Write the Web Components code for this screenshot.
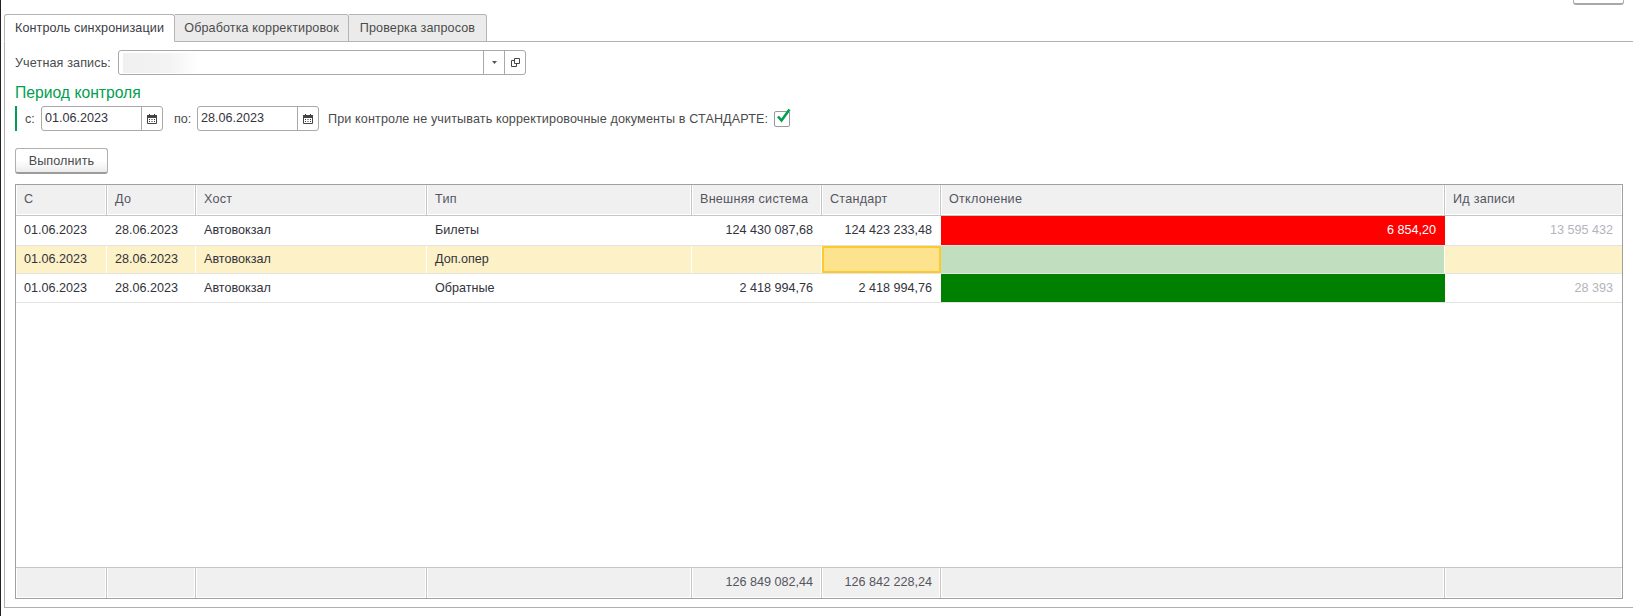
<!DOCTYPE html>
<html>
<head>
<meta charset="utf-8">
<title>Контроль синхронизации</title>
<style>
    html, body { margin: 0; background: #fff; overflow: hidden; }
    body { font: 12.6px "Liberation Sans", Arial, sans-serif; color: #4b4b4b; }
</style>
</head>
<body>
<sync-page></sync-page>

<script>
const CALENDAR_ICON = `
<svg width="10" height="10" viewBox="0 0 10 10">
    <rect x="2" y="0" width="1" height="2" fill="#333"/>
    <rect x="7" y="0" width="1" height="2" fill="#333"/>
    <path d="M.5 1.500h9v8h-9z" fill="#fff" stroke="#444"/>
    <rect x="0" y="1" width="10" height="3" fill="#444"/>
    <path d="M2 5h1v1H2zM4.500 5h1v1h-1zM7 5h1v1H7zM2 7h1v1H2zM4.500 7h1v1h-1zM7 7h1v1H7z" fill="#333"/>
</svg>`;

class TabStrip extends HTMLElement {
    constructor() {
        super();
        this.attachShadow({ mode: "open" });
    }

    connectedCallback() {
        const titles = this.getAttribute("titles").split("|");
        this.shadowRoot.innerHTML = `
        <style>
            :host { display: block; }
            .Strip {
                display: flex;
                height: 27px;
                padding-left: 3px;
            }
            .Tab {
                box-sizing: border-box;
                height: 28px;
                line-height: 26px;
                text-align: center;
                letter-spacing: 0.1px;
                color: #4b4b4b;
                background: #ebebeb;
                border: 1px solid #b4b4b4;
                border-left: 0;
                border-radius: 0 3px 0 0;
            }
            .Tab.Active {
                position: relative;
                background: #fff;
                border-left: 1px solid #b4b4b4;
                border-bottom-color: #fff;
                border-radius: 3px 3px 0 0;
                color: #3c3c46;
            }
            .Panel {
                box-sizing: border-box;
                height: 567px;
                margin-left: 3px;
                padding: 8px 10px 9px 10px;
                border: 1px solid #b0b0b0;
                border-right: 0;
            }
        </style>
        <div class="Strip">
            ${titles.map((t, i) => `<div class="Tab ${i == 0 ? "Active" : ""}" style="width:${[171, 174, 138][i]}px">${t}</div>`).join("")}
        </div>
        <div class="Panel"><slot></slot></div>`;
    }
}

class TextField extends HTMLElement {
    constructor() {
        super();
        this.attachShadow({ mode: "open" });
    }

    connectedCallback() {
        this.shadowRoot.innerHTML = `
        <style>
            :host { display: flex; align-items: center; height: 25px; }
            .Label { width: 103px; letter-spacing: 0.12px; white-space: nowrap; }
            .Box {
                box-sizing: border-box;
                display: flex;
                width: 408px;
                height: 25px;
                border: 1px solid #a9a9a9;
                border-radius: 3px;
            }
            .Value { flex: 1; position: relative; overflow: hidden; }
            .Smudge {
                position: absolute;
                left: 4px;
                top: 2px;
                width: 76px;
                height: 20px;
                background: linear-gradient(to right, #f0f0f0, #f3f3f3 60%, #fff);
            }
            .Btn {
                box-sizing: border-box;
                width: 21px;
                display: flex;
                align-items: center;
                justify-content: center;
                border-left: 1px solid #a9a9a9;
            }
        </style>
        <span class="Label">${this.getAttribute("label")}</span>
        <div class="Box">
            <div class="Value"><div class="Smudge"></div></div>
            <div class="Btn">
                <svg width="5" height="3" viewBox="0 0 5 3"><path d="M0 0h5L2.500 3z" fill="#555"/></svg>
            </div>
            <div class="Btn">
                <svg width="9" height="9" viewBox="0 0 9 9" fill="none" stroke="#444">
                    <path d="M3.500 .5h5v5h-5z"/>
                    <path d="M3.500 2.500h-3v6h5v-3"/>
                </svg>
            </div>
        </div>`;
    }
}

class DateField extends HTMLElement {
    constructor() {
        super();
        this.attachShadow({ mode: "open" });
    }

    connectedCallback() {
        this.shadowRoot.innerHTML = `
        <style>
            :host { display: block; }
            .Box {
                box-sizing: border-box;
                display: flex;
                width: 122px;
                height: 25px;
                border: 1px solid #a9a9a9;
                border-radius: 3px;
            }
            .Value {
                flex: 1;
                padding-left: 3px;
                line-height: 23px;
                color: #33333c;
            }
            .Btn {
                box-sizing: border-box;
                width: 21px;
                display: flex;
                align-items: center;
                justify-content: center;
                border-left: 1px solid #a9a9a9;
            }
        </style>
        <div class="Box">
            <div class="Value">${this.getAttribute("value")}</div>
            <div class="Btn">${CALENDAR_ICON}</div>
        </div>`;
    }
}

class CheckBox extends HTMLElement {
    constructor() {
        super();
        this.attachShadow({ mode: "open" });
    }

    connectedCallback() {
        this.shadowRoot.innerHTML = `
        <style>
            :host { display: block; position: relative; width: 16px; height: 16px; }
            .Box {
                box-sizing: border-box;
                width: 16px;
                height: 16px;
                border: 1px solid #9a9a9a;
                border-radius: 2px;
            }
            svg { position: absolute; left: 2px; top: -3px; }
        </style>
        <div class="Box"></div>
        <svg width="15" height="15" viewBox="0 0 15 15">
            <path d="M2 8.500l3.500 4L13.500 1.500" fill="none" stroke="#00a04e" stroke-width="2.600"/>
        </svg>`;
    }
}

class PushButton extends HTMLElement {
    constructor() {
        super();
        this.attachShadow({ mode: "open" });
    }

    connectedCallback() {
        this.shadowRoot.innerHTML = `
        <style>
            :host { display: block; width: 93px; }
            .Btn {
                box-sizing: border-box;
                height: 26px;
                line-height: 24px;
                text-align: center;
                letter-spacing: 0.1px;
                color: #4b4b4b;
                border: 1px solid #b0b0b0;
                border-bottom: 2px solid #9c9c9c;
                border-radius: 3px;
                background: linear-gradient(#fff, #fff 50%, #ececec);
            }
        </style>
        <div class="Btn"><slot></slot></div>`;
    }
}

const COLUMNS = "91px 89px 231px 265px 130px 119px 504px 177px";

class DataGrid extends HTMLElement {
    constructor() {
        super();
        this.attachShadow({ mode: "open" });
        this.head = ["С", "До", "Хост", "Тип", "Внешняя система", "Стандарт", "Отклонение", "Ид записи"];
        this.rows = [
            { height: 30, cells: ["01.06.2023", "28.06.2023", "Автовокзал", "Билеты", "124 430 087,68", "124 423 233,48", "6 854,20", "13 595 432"], state: "Red" },
            { height: 28, cells: ["01.06.2023", "28.06.2023", "Автовокзал", "Доп.опер", "", "", "", ""], state: "Pale", selected: true },
            { height: 29, cells: ["01.06.2023", "28.06.2023", "Автовокзал", "Обратные", "2 418 994,76", "2 418 994,76", "", "28 393"], state: "Green" },
        ];
        this.totals = ["", "", "", "", "126 849 082,44", "126 842 228,24", "", ""];
    }

    connectedCallback() {
        this.render();
    }

    renderRow(row) {
        const cells = row.cells.map((text, i) => {
            let cls = "Cell";
            if (i >= 4) cls += " Num";
            if (i == 5 && row.selected) cls += " Current";
            if (i == 6) cls += " " + row.state;
            if (i == 7) cls += " Id";
            return `<div class="${cls}">${text}</div>`;
        });
        return `<div class="Row ${row.selected ? "Selected" : ""}" style="height:${row.height}px">${cells.join("")}</div>`;
    }

    render() {
        this.shadowRoot.innerHTML = `
        <style>
            :host {
                display: flex;
                flex-direction: column;
                box-sizing: border-box;
                height: 415px;
                border: 1px solid #a0a0a0;
                color: #33333c;
            }
            .Row, .Head, .Foot {
                display: grid;
                grid-template-columns: ${COLUMNS};
                box-sizing: border-box;
            }
            .Head, .Foot { height: 31px; color: #55555f; }
            .Head { border-bottom: 1px solid #c6c6c6; letter-spacing: 0.25px; }
            .Foot { margin-top: auto; height: 31px; border-top: 1px solid #c6c6c6; }
            .Head > div, .Foot > div {
                box-sizing: border-box;
                padding: 0 8px;
                line-height: 29px;
                background: #f0f0f0;
                border-right: 1px solid #c6c6c6;
                box-shadow: inset 1px 0 0 #fff, inset -1px 0 0 #fff, inset 0 -1px 0 #fff;
            }
            .Head > div:last-child, .Foot > div:last-child { border-right: 0; }
            .Foot > div { text-align: right; line-height: 28px; }
            .Row { border-bottom: 1px solid #e3e3e3; }
            .Cell {
                box-sizing: border-box;
                padding: 0 8px;
                line-height: 28px;
                white-space: nowrap;
            }
            .Cell:first-child { padding-left: 8px; }
            .Num { text-align: right; padding-right: 9px; }
            .Id { color: #b4b4bc; }
            .Red { background: #f00; color: #fff; }
            .Green { background: #008000; }
            .Pale { background: #c1dfbf; }
            .Selected .Cell {
                background: #fdf1c7;
                border-right: 1px solid #fff;
                line-height: 27px;
            }
            .Selected .Cell.Pale { background: #c1dfbf; }
            .Selected .Cell:last-child { border-right: 0; }
            .Selected .Cell.Current {
                background: #fde38d;
                border: 2px solid #fdc92b;
            }
        </style>
        <div class="Head">${this.head.map(h => `<div>${h}</div>`).join("")}</div>
        ${this.rows.map(r => this.renderRow(r)).join("")}
        <div class="Foot">${this.totals.map(t => `<div>${t}</div>`).join("")}</div>`;
    }
}

class SyncPage extends HTMLElement {
    constructor() {
        super();
        this.attachShadow({ mode: "open" });
    }

    connectedCallback() {
        this.shadowRoot.innerHTML = `
        <style>
            :host {
                display: block;
                box-sizing: border-box;
                width: 1633px;
                height: 616px;
            }
            .Frame { height: 616px; border-left: 1px solid #222; box-sizing: border-box; }
            .Top { display: flex; justify-content: flex-end; height: 14px; padding-right: 9px; }
            .Stub {
                box-sizing: border-box;
                width: 51px;
                height: 5px;
                border: 1px solid #b0b0b0;
                border-top: 0;
                border-bottom: 2px solid #a8a8a8;
                border-radius: 0 0 3px 3px;
            }
            .Title {
                margin-top: 7px;
                height: 24px;
                line-height: 21px;
                font-size: 15.7px;
                color: #00a04e;
            }
            .Period {
                display: flex;
                align-items: center;
                height: 25px;
                border-left: 2px solid #00a04e;
            }
            .C { margin-left: 8px; width: 16px; }
            .Po { margin-left: 11px; width: 23px; }
            .Note { margin-left: 9px; margin-right: 6px; letter-spacing: 0.12px; white-space: nowrap; }
            push-button { margin-top: 17px; }
            data-grid { margin-top: 10px; }
        </style>
        <div class="Frame">
            <div class="Top"><div class="Stub"></div></div>
            <tab-strip titles="Контроль синхронизации|Обработка корректировок|Проверка запросов">
                <text-field label="Учетная запись:"></text-field>
                <div class="Title">Период контроля</div>
                <div class="Period">
                    <span class="C">с:</span>
                    <date-field value="01.06.2023"></date-field>
                    <span class="Po">по:</span>
                    <date-field value="28.06.2023"></date-field>
                    <span class="Note">При контроле не учитывать корректировочные документы в СТАНДАРТЕ:</span>
                    <check-box></check-box>
                </div>
                <push-button>Выполнить</push-button>
                <data-grid></data-grid>
            </tab-strip>
        </div>`;
    }
}

customElements.define("tab-strip", TabStrip);
customElements.define("text-field", TextField);
customElements.define("date-field", DateField);
customElements.define("check-box", CheckBox);
customElements.define("push-button", PushButton);
customElements.define("data-grid", DataGrid);
customElements.define("sync-page", SyncPage);
</script>
</body>
</html>
